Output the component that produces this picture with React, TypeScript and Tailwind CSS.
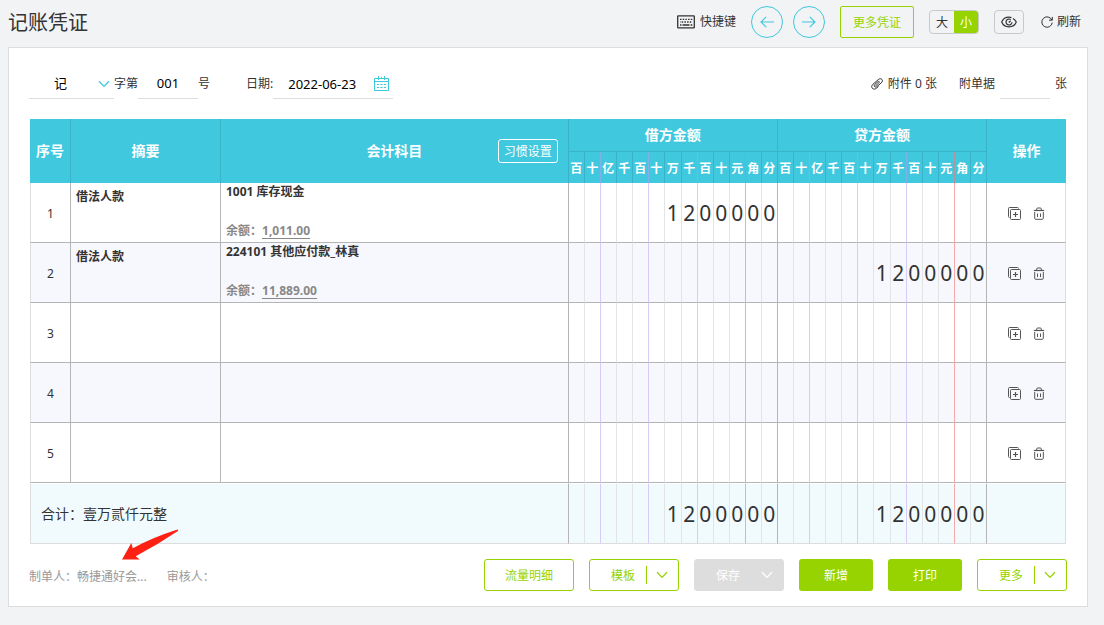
import { clsx } from "clsx";

type Entry = {
  summary: string;
  subject: string;
  balance: string;
  debit: string;
  credit: string;
};

const UNITS = ["百", "十", "亿", "千", "百", "十", "万", "千", "百", "十", "元", "角", "分"];

const EMPTY: Entry = { summary: "", subject: "", balance: "", debit: "", credit: "" };

const ENTRIES: Entry[] = [
  { summary: "借法人款", subject: "1001 库存现金", balance: "1,011.00", debit: "1200000", credit: "" },
  { summary: "借法人款", subject: "224101 其他应付款_林真", balance: "11,889.00", debit: "", credit: "1200000" },
  EMPTY,
  EMPTY,
  EMPTY,
];

// every third digit gets a purple rule, the decimal point a red one
const bodyRule = (i: number) => {
  if (i === 12) return "border-r-[#b5b5b5]";
  if (i === 10) return "border-r-[#f7a8a8]";
  if (i === 1 || i === 4 || i === 7) return "border-r-[#d8ccf7]";
  return "border-r-[#e2e4e6]";
};

const headRule = (i: number) => {
  if (i === 10) return "border-r-[#b0959f]";
  if (i === 1 || i === 4 || i === 7) return "border-r-[#82b0e8]";
  return "border-r-[#38b3c7]";
};

const Chevron = ({ className }: { className?: string }) => (
  <svg viewBox="0 0 12 8" fill="none" stroke="currentColor" className={clsx("h-2 w-3", className)}>
    <path d="M1 1.2 6 6.4l5-5.2" strokeWidth="1.3" />
  </svg>
);

const KeyboardIcon = () => (
  <svg viewBox="0 0 18 14" fill="none" stroke="currentColor" className="h-3.5 w-[18px]">
    <rect x="0.7" y="0.9" width="16.6" height="12" rx="0.6" strokeWidth="1.3" />
    <path d="M3 4.3h12.5" strokeWidth="1.3" strokeDasharray="1.5 1.2" />
    <path d="M3 7h12.5" strokeWidth="1.3" strokeDasharray="1.5 1.2" strokeDashoffset="1" />
    <path d="M3 10h1.5M5.5 10h7M13.6 10h1.7" strokeWidth="1.3" />
  </svg>
);

const EyeIcon = () => (
  <svg viewBox="0 0 16 12" fill="none" stroke="currentColor" className="h-3 w-4">
    <path
      d="M12 2.400c1.500.9 2.700 2.200 3.300 3.600-1.200 2.900-4 4.800-7.300 4.800S1.900 8.900.7 6C1.900 3.100 4.700 1.200 8 1.200c.9 0 1.700.1 2.400.4"
      strokeWidth="1.2"
    />
    <path d="M9.800 3.600A3 3 0 1 0 11 6.200" strokeWidth="1.2" />
    <path d="M9.600 4.800 7.800 6.500" strokeWidth="1.3" />
  </svg>
);

const RefreshIcon = () => (
  <svg viewBox="0 0 12 12" fill="none" stroke="currentColor" className="size-3">
    <path d="M10.8 4A5.200 5.200 0 1 0 11.200 6.600" />
    <path d="M11.300.9v3.300H8" />
  </svg>
);

const ClipIcon = () => (
  <svg viewBox="0 0 12 12" fill="none" stroke="currentColor" className="size-3">
    <path d="M4.300 8.300 8 4.600c.8-.8 0-1.700-.9-1L3.900 6.300" />
    <path d="M3.900 6.300c-1 .9-.8 2.200 0 2.600.7.400 1.400.2 2-.3l4.300-3.700c1.400-1.200 1.500-2.600.7-3.500-.9-1-2.400-.9-3.600.2L2 6.200C.5 7.500.4 9.200 1.300 10.300c1 1.100 2.700 1.100 4 0l2.300-2" />
  </svg>
);

const CalendarIcon = () => (
  <svg viewBox="0 0 15 15" fill="none" stroke="currentColor" className="size-[15px]">
    <path d="M.5 2.500h14v12H.5zM.5 5.500h14" />
    <path d="M4.500 0v4M10.500 0v4M7.500 1v2" />
    <path d="M3 8.500h9M3 11.500h9" strokeDasharray="2.200 1.200" />
  </svg>
);

const AddRowIcon = () => (
  <svg viewBox="0 0 13 13" fill="none" stroke="currentColor" className="size-[13px]">
    <path d="M10.500 1.500a1 1 0 0 0-1-1h-8a1 1 0 0 0-1 1v8a1 1 0 0 0 1 1" />
    <rect x="2.500" y="2.500" width="10" height="10" rx="1" />
    <path d="M7.500 5v5M5 7.500h5" strokeWidth="1.200" />
  </svg>
);

const TrashIcon = () => (
  <svg viewBox="0 0 12 13" fill="none" stroke="currentColor" className="h-[13px] w-3">
    <path d="M.8 3.500h10.400" strokeWidth="1.200" />
    <path d="M3.700 3.300V2a1 1 0 0 1 1-1h2.600a1 1 0 0 1 1 1v1.300M1.700 5v6.300a1 1 0 0 0 1 1h6.600a1 1 0 0 0 1-1V5" />
    <path d="M4.500 6.500v3.500M7.500 6.500v3.500" />
  </svg>
);

const ArrowIcon = ({ back }: { back?: boolean }) => (
  <svg
    viewBox="0 0 14 12"
    fill="none"
    stroke="currentColor"
    className={clsx("h-3 w-3.5", back && "rotate-180")}
  >
    <path d="M0 6h13M7.8.8 13 6l-5.200 5.200" strokeWidth="1.200" />
  </svg>
);

const AmountCells = ({ value, className }: { value: string; className?: string }) => {
  const digits = value.padStart(UNITS.length, " ").split("");
  return (
    <>
      {digits.map((digit, i) => (
        <td
          key={i}
          className={clsx("border-r pt-px text-center text-[21px] leading-6 text-[#333]", bodyRule(i), className)}
        >
          {digit.trim()}
        </td>
      ))}
    </>
  );
};

const UnitHeads = () => (
  <>
    {UNITS.map((unit, i) => (
      <th key={i} scope="col" className={clsx("h-[31px] border-r pt-0.5 text-center text-xs font-bold", headRule(i))}>
        {unit}
      </th>
    ))}
  </>
);

const AmountCols = () => (
  <>
    {UNITS.map((unit, i) => (
      <col key={i} className={unit === "万" ? "w-[17px]" : "w-4"} />
    ))}
  </>
);

const SplitButton = ({ label, disabled }: { label: string; disabled?: boolean }) => (
  <div
    className={clsx(
      "flex h-8 w-[90px] items-center rounded-[3px] border",
      disabled ? "border-[#ddd] bg-[#ddd] text-white" : "border-[#96d300] bg-white text-[#96d300]"
    )}
  >
    <button type="button" disabled={disabled} className="h-full flex-1 pt-0.5 pl-2.5">
      {label}
    </button>
    <button
      type="button"
      disabled={disabled}
      aria-label={`${label}选项`}
      className={clsx(
        "flex h-[18px] w-8 items-center justify-center border-l pr-0.5",
        disabled ? "border-[#ddd]" : "border-[#96d300]"
      )}
    >
      <Chevron />
    </button>
  </div>
);

const Toolbar = () => (
  <header className="mb-[3px] flex h-11 items-center justify-between pr-[7px]">
    <h1 className="pt-0.5 text-[20px] font-normal text-[#333]">记账凭证</h1>
    <div className="flex items-center gap-[15px]">
      <button type="button" className="flex items-center gap-[5px]">
        <KeyboardIcon />
        快捷键
      </button>
      <div className="flex gap-2.5 text-[#3fc8de]">
        <button
          type="button"
          aria-label="上一张"
          className="flex size-8 items-center justify-center rounded-full border border-[#3fc8de]"
        >
          <ArrowIcon back />
        </button>
        <button
          type="button"
          aria-label="下一张"
          className="flex size-8 items-center justify-center rounded-full border border-[#3fc8de]"
        >
          <ArrowIcon />
        </button>
      </div>
      <button
        type="button"
        className="h-8 w-[74px] rounded-[2px] border border-[#96d300] pt-0.5 text-[#96d300]"
      >
        更多凭证
      </button>
      <div className="flex h-6 w-[50px] overflow-hidden rounded-[4px] border border-[#c8c9cb]">
        <button type="button" className="flex-1 pt-0.5">
          大
        </button>
        <button type="button" className="flex-1 bg-[#96d300] pt-0.5 text-white">
          小
        </button>
      </div>
      <button
        type="button"
        aria-label="显示设置"
        className="flex h-6 w-[30px] items-center justify-center rounded-[4px] border border-[#c8c9cb]"
      >
        <EyeIcon />
      </button>
      <button type="button" className="ml-0.5 flex items-center gap-1">
        <RefreshIcon />
        刷新
      </button>
    </div>
  </header>
);

const VoucherForm = () => (
  <div className="mb-5 flex h-[31px] items-stretch justify-between">
    <div className="flex">
      <div className="relative w-[85px]">
        <select
          id="voucher-type"
          defaultValue="记"
          className="h-full w-full appearance-none border-b border-[#ddd] bg-transparent pt-0.5 pl-[25px] text-[13px] text-black outline-none"
        >
          <option>记</option>
          <option>收</option>
          <option>付</option>
          <option>转</option>
        </select>
        <Chevron className="pointer-events-none absolute top-3 right-1 text-[#3fc8de]" />
      </div>
      <label htmlFor="voucher-type" className="self-center">
        字第
      </label>
      <input
        id="voucher-no"
        type="text"
        defaultValue="001"
        className="w-[60px] border-b border-[#ddd] pt-0.5 text-center text-[13px] text-black outline-none"
      />
      <label htmlFor="voucher-no" className="self-center">
        号
      </label>
      <label htmlFor="voucher-date" className="ml-9 self-center">
        日期:
      </label>
      <div className="flex w-[120px] items-center border-b border-[#ddd] pr-1">
        <input
          id="voucher-date"
          type="text"
          defaultValue="2022-06-23"
          className="h-full min-w-0 flex-1 pt-0.5 pl-[15px] text-[13px] text-black outline-none"
        />
        <button type="button" aria-label="选择日期" className="text-[#3fc8de]">
          <CalendarIcon />
        </button>
      </div>
    </div>
    <div className="flex">
      <button type="button" className="mr-[22px] flex items-center gap-[5px]">
        <ClipIcon />
        附件 0 张
      </button>
      <label htmlFor="receipt-count" className="self-center">
        附单据
      </label>
      <input
        id="receipt-count"
        type="text"
        className="mx-[5px] w-[50px] border-b border-[#ddd] text-center text-[13px] outline-none"
      />
      <span className="self-center">张</span>
    </div>
  </div>
);

const VoucherTable = () => (
  <div className="px-px">
    <table className="w-full table-fixed border-separate border-spacing-0">
      <colgroup>
        <col className="w-[41px]" />
        <col className="w-[150px]" />
        <col />
        <AmountCols />
        <AmountCols />
        <col className="w-[79px]" />
      </colgroup>
      <thead className="bg-[#3fc8de] text-sm text-white">
        <tr>
          <th scope="col" rowSpan={2} className="border-r border-[#38b3c7]">
            序号
          </th>
          <th scope="col" rowSpan={2} className="border-r border-[#38b3c7]">
            摘要
          </th>
          <th scope="col" rowSpan={2} className="border-r border-[#38b3c7]">
            <div className="grid grid-cols-[1fr_auto_1fr] items-center">
              <span className="col-start-2">会计科目</span>
              <button
                type="button"
                className="mr-2.5 h-6 w-[60px] justify-self-end rounded-[3px] border border-white pt-0.5 text-xs font-normal"
              >
                习惯设置
              </button>
            </div>
          </th>
          <th scope="colgroup" colSpan={13} className="h-[33px] border-r border-b border-[#38b3c7]">
            借方金额
          </th>
          <th scope="colgroup" colSpan={13} className="h-[33px] border-r border-b border-[#38b3c7]">
            贷方金额
          </th>
          <th scope="col" rowSpan={2}>
            操作
          </th>
        </tr>
        <tr>
          <UnitHeads />
          <UnitHeads />
        </tr>
      </thead>
      <tbody>
        {ENTRIES.map((entry, index) => (
          <tr key={index} className="h-[60px] even:bg-[#f7f8fd]">
            <td className="border-r border-b border-l border-[#b5b5b5] border-l-[#ddd] pt-0.5 text-center">
              {index + 1}
            </td>
            <td className="border-r border-b border-[#b5b5b5] pt-[5px] pl-[5px] align-top leading-[18px] font-bold">
              {entry.summary}
            </td>
            <td className="border-r border-b border-[#b5b5b5] pl-[5px] align-top font-bold">
              {entry.subject && (
                <div className="flex h-[57px] flex-col justify-between leading-[18px]">
                  <p>{entry.subject}</p>
                  <p className="text-[#888]">
                    余额：
                    <a href="#balance" className="inline-block border-b border-[#888] leading-[14px]">
                      {entry.balance}
                    </a>
                  </p>
                </div>
              )}
            </td>
            <AmountCells value={entry.debit} className="border-b border-b-[#b5b5b5]" />
            <AmountCells value={entry.credit} className="border-b border-b-[#b5b5b5]" />
            <td className="border-r border-b border-[#b5b5b5] border-r-[#ddd] pt-0.5">
              <div className="flex items-center justify-center gap-3 text-[#555]">
                <button type="button" aria-label="插入分录">
                  <AddRowIcon />
                </button>
                <button type="button" aria-label="删除分录">
                  <TrashIcon />
                </button>
              </div>
            </td>
          </tr>
        ))}
      </tbody>
      <tfoot>
        <tr className="h-[61px] bg-[#f1fbfe]">
          <td
            colSpan={3}
            className="border border-t-white border-r-[#b5b5b5] border-b-[#ddd] border-l-[#ddd] pl-2.5 text-sm"
          >
            合计：壹万贰仟元整
          </td>
          <AmountCells value="1200000" className="border-t border-b border-t-white border-b-[#ddd]" />
          <AmountCells value="1200000" className="border-t border-b border-t-white border-b-[#ddd]" />
          <td className="border-t border-r border-b border-[#ddd] border-t-white" />
        </tr>
      </tfoot>
    </table>
  </div>
);

const Footer = () => (
  <footer className="mt-[15px] flex items-center justify-between">
    <div className="relative flex gap-5 pt-1 text-[#999]">
      <span>制单人：畅捷通好会...</span>
      <span>审核人：</span>
      <svg viewBox="0 0 58 32" className="pointer-events-none absolute bottom-6 left-[92px] h-8 w-[58px]">
        <path
          d="M1 30.500 10.300 14l1.500 5.300Q30 9 56.500.5l.8 1.200Q36 16 14.700 27.300l4 3.200Z"
          fill="#fd2013"
        />
      </svg>
    </div>
    <div className="flex gap-[15px]">
      <button
        type="button"
        className="h-8 w-[90px] rounded-[3px] border border-[#96d300] pt-0.5 text-[#96d300]"
      >
        流量明细
      </button>
      <SplitButton label="模板" />
      <SplitButton label="保存" disabled />
      <button type="button" className="h-8 w-[74px] rounded-[3px] bg-[#96d300] pt-0.5 text-white">
        新增
      </button>
      <button type="button" className="h-8 w-[74px] rounded-[3px] bg-[#96d300] pt-0.5 text-white">
        打印
      </button>
      <SplitButton label="更多" />
    </div>
  </footer>
);

export default function App() {
  return (
    <div
      lang="zh-CN"
      className="min-h-screen bg-[#f2f3f5] pr-4 pl-2 font-['Noto_Sans','Noto_Sans_CJK_SC',sans-serif] text-xs text-[#333]"
    >
      <Toolbar />
      <main className="border border-[#ddd] bg-white px-5 pt-5 pb-[15px]">
        <VoucherForm />
        <VoucherTable />
        <Footer />
      </main>
    </div>
  );
}
